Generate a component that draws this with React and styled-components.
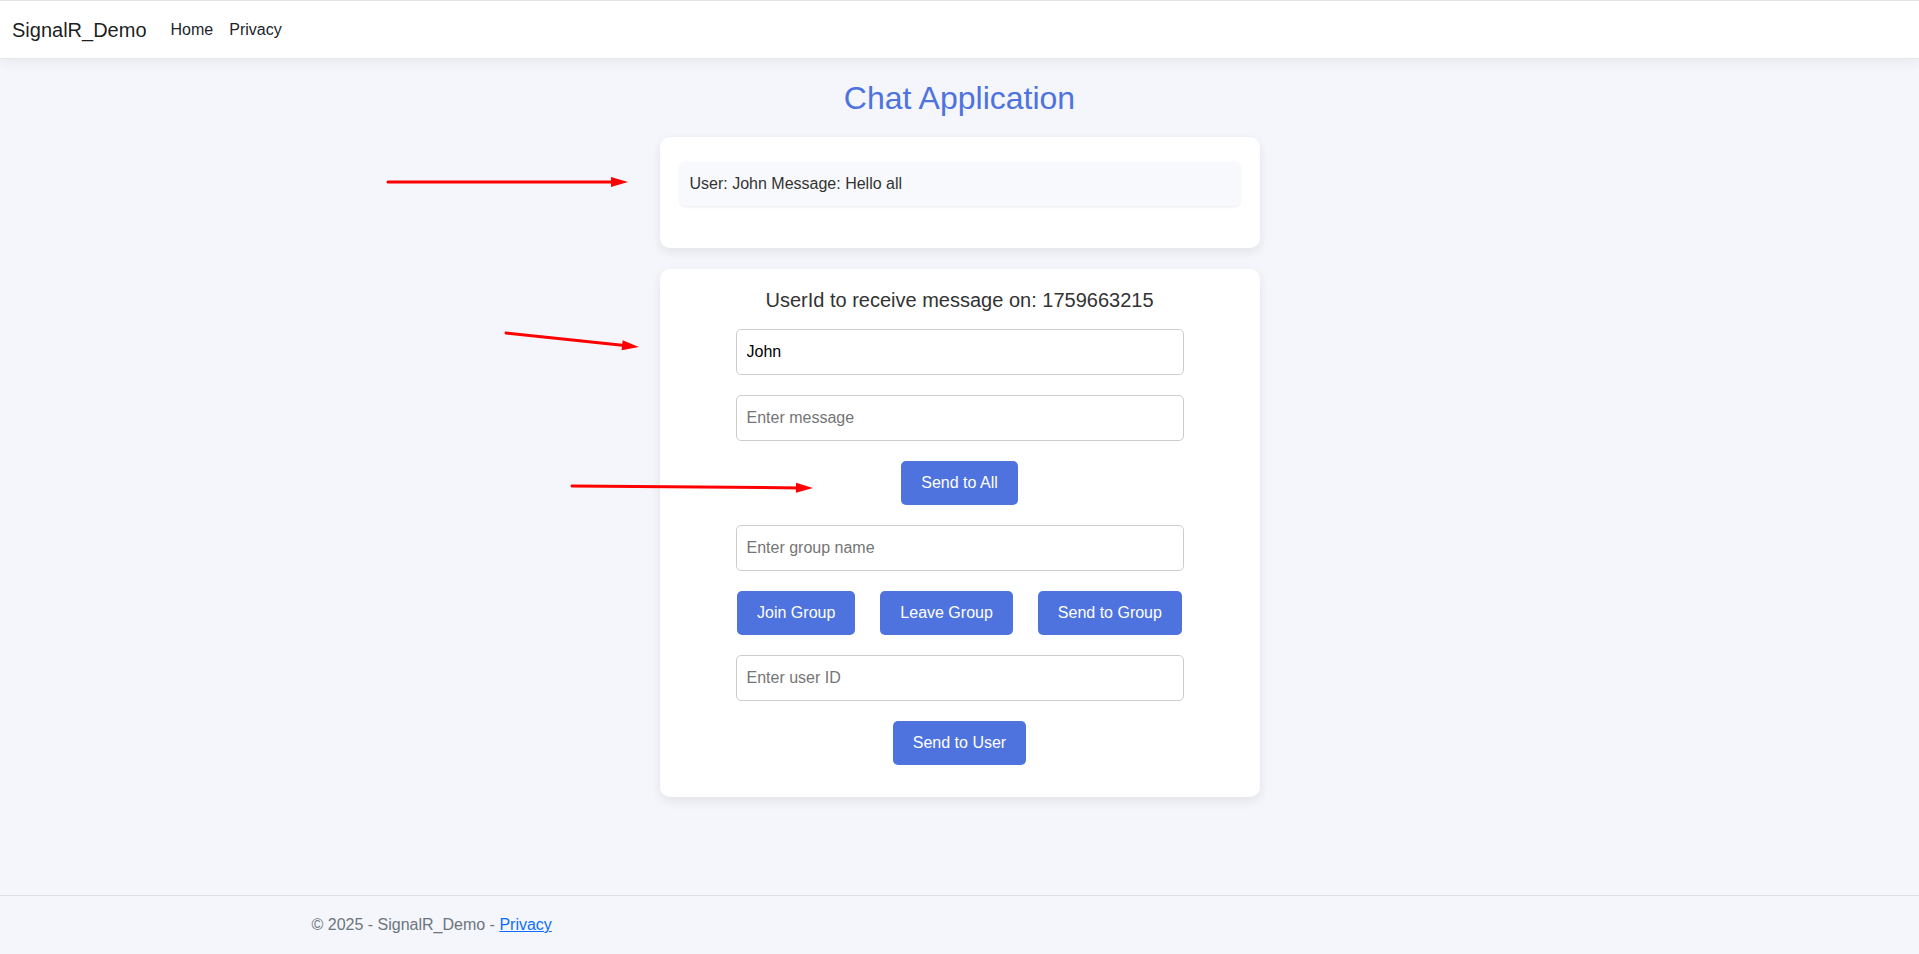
import React from "react";
import styled, { createGlobalStyle } from "styled-components";

const GlobalStyle = createGlobalStyle`
  html, body {
    margin: 0;
    padding: 0;
  }
  body {
    font-family: "Liberation Sans", Arial, sans-serif;
    background: #f4f6fb;
    color: #212529;
  }
  * {
    box-sizing: border-box;
  }
`;

export default function App() {
  const messages = [{ user: "John", text: "Hello all" }];

  return (
    <Page>
      <GlobalStyle />
      <Navbar>
        <Brand>SignalR_Demo</Brand>
        <NavLink>Home</NavLink>
        <NavLink>Privacy</NavLink>
      </Navbar>

      <Main>
        <Title>Chat Application</Title>

        <Card>
          <MessageList>
            {messages.map((m, i) => (
              <MessageItem key={i}>
                User: {m.user} Message: {m.text}
              </MessageItem>
            ))}
          </MessageList>
        </Card>

        <FormCard>
          <UserIdHeading>UserId to receive message on: 1759663215</UserIdHeading>
          <Input defaultValue="John" />
          <Input placeholder="Enter message" />
          <Button>Send to All</Button>
          <Input placeholder="Enter group name" />
          <ButtonRow>
            <Button>Join Group</Button>
            <Button>Leave Group</Button>
            <Button>Send to Group</Button>
          </ButtonRow>
          <Input placeholder="Enter user ID" />
          <Button>Send to User</Button>
        </FormCard>
      </Main>

      <Footer>
        <FooterInner>
          © 2025 - SignalR_Demo - <FooterLink>Privacy</FooterLink>
        </FooterInner>
      </Footer>

      <Annotations viewBox="0 0 1919 954">
        <Arrow x1={388} y1={182} x2={628} y2={182} />
        <Arrow x1={506} y1={333} x2={639} y2={347} />
        <Arrow x1={572} y1={486} x2={813} y2={488} />
      </Annotations>
    </Page>
  );
}

function Arrow({ x1, y1, x2, y2 }) {
  const angle = (Math.atan2(y2 - y1, x2 - x1) * 180) / Math.PI;
  return (
    <g>
      <line x1={x1} y1={y1} x2={x2 - 12} y2={y2 - (y2 - y1) * 12 / (x2 - x1)} stroke="#ff0000" strokeWidth="3" strokeLinecap="round" />
      <polygon
        points="0,0 -17,-5 -17,5"
        fill="#ff0000"
        transform={`translate(${x2} ${y2}) rotate(${angle})`}
      />
    </g>
  );
}

const Page = styled.div`
  position: relative;
  min-height: 100vh;
  display: flex;
  flex-direction: column;
`;

const Navbar = styled.nav`
  display: flex;
  align-items: center;
  height: 59px;
  padding: 8px 12px;
  background: #fff;
  border-top: 1px solid #e3e3e3;
  border-bottom: 1px solid #e6e8ec;
  box-shadow: 0 4px 12px rgba(0, 0, 0, 0.05);
  position: relative;
  z-index: 1;
`;

const Brand = styled.a`
  font-size: 20px;
  line-height: 30px;
  color: rgba(0, 0, 0, 0.9);
  margin-right: 16px;
  padding: 5px 0;
`;

const NavLink = styled.a`
  font-size: 16px;
  color: #212529;
  padding: 8px;
`;

const Main = styled.main`
  flex: 1;
  display: flex;
  flex-direction: column;
  align-items: center;
  padding-top: 20px;
`;

const Title = styled.h2`
  margin: 0 0 20px;
  font-size: 32px;
  font-weight: 400;
  line-height: 38px;
  color: #4e73df;
`;

const Card = styled.section`
  width: 600px;
  background: #fff;
  border-radius: 10px;
  box-shadow: 0 4px 12px rgba(0, 0, 0, 0.08);
  padding: 20px;
`;

const MessageList = styled.ul`
  list-style: none;
  margin: 0 0 22px;
  padding: 0;
`;

const MessageItem = styled.li`
  margin: 5px 0;
  padding: 10px;
  background: #f8f9fc;
  border-radius: 5px;
  box-shadow: 0 1px 3px rgba(0, 0, 0, 0.08);
  font-size: 16px;
  line-height: 24px;
  color: #333;
`;

const FormCard = styled(Card)`
  margin-top: 21px;
  display: flex;
  flex-direction: column;
  align-items: center;
  gap: 20px;
  padding: 19px 20px 32px;
`;

const UserIdHeading = styled.h5`
  margin: 0 0 -3px;
  font-size: 20px;
  font-weight: 400;
  line-height: 24px;
  color: #333;
`;

const Input = styled.input`
  width: 448px;
  height: 46px;
  padding: 10px;
  font-family: inherit;
  font-size: 16px;
  color: #000;
  border: 1px solid #ccc;
  border-radius: 5px;
  background: #fff;
  outline: none;

  &::placeholder {
    color: #757575;
  }
`;

const Button = styled.button`
  height: 44px;
  padding: 10px 20px;
  font-family: inherit;
  font-size: 16px;
  line-height: 24px;
  color: #fff;
  background: #4e73df;
  border: none;
  border-radius: 5px;
  cursor: pointer;
`;

const ButtonRow = styled.div`
  display: flex;
  justify-content: center;
  gap: 25px;
  width: 448px;
`;

const Footer = styled.footer`
  height: 59px;
  border-top: 1px solid #dee2e6;
  line-height: 58px;
  color: #6c757d;
  font-size: 16px;
`;

const FooterInner = styled.div`
  max-width: 1320px;
  margin: 0 auto;
  padding: 0 12px;
`;

const FooterLink = styled.a`
  color: #0d6efd;
  text-decoration: underline;
`;

const Annotations = styled.svg`
  position: absolute;
  top: 0;
  left: 0;
  width: 1919px;
  height: 954px;
  pointer-events: none;
`;
